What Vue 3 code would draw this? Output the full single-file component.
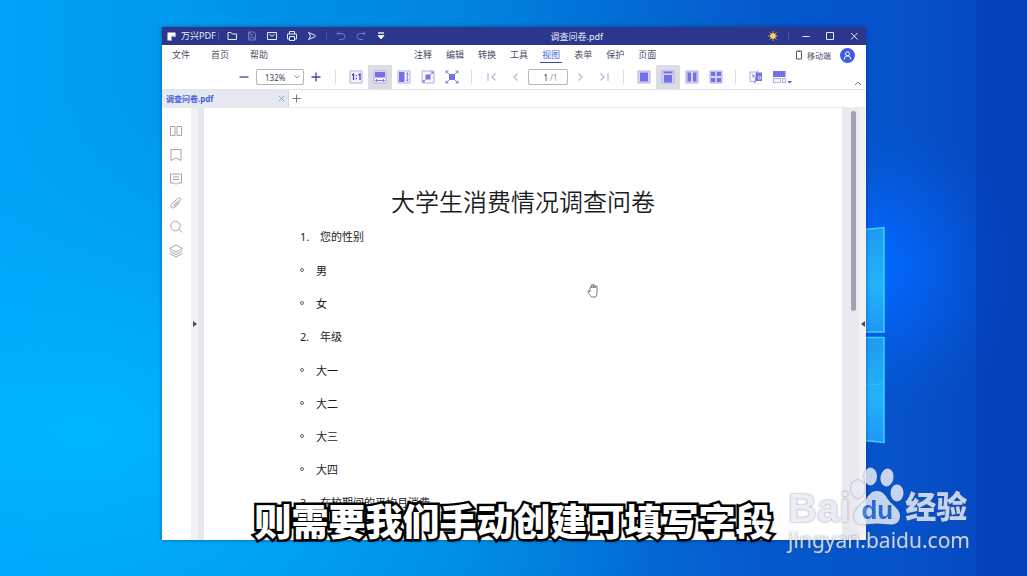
<script setup>
import { ref } from 'vue';

const leftMenus = ['文件', '首页', '帮助'];
const tabs = ['注释', '编辑', '转换', '工具', '视图', '表单', '保护', '页面'];
const activeTab = ref('视图');

const zoom = ref('132%');
const page = ref('1');
const fitMode = ref('width');
const layoutMode = ref('scroll');

const lines = [
  { num: '1.', text: '您的性别' },
  { text: '男' },
  { text: '女' },
  { num: '2.', text: '年级' },
  { text: '大一' },
  { text: '大二' },
  { text: '大三' },
  { text: '大四' },
  { num: '3.', text: '在校期间的平均月消费' },
];
</script>

<template>
  <div class="desktop">
    <!-- wallpaper -->
    <svg class="wallpaper" viewBox="0 0 1027 576" preserveAspectRatio="none" aria-hidden="true">
      <defs>
        <linearGradient id="sky" x1="0" y1="0" x2="1" y2="0">
          <stop offset="0" stop-color="#00a3f8" />
          <stop offset="0.16" stop-color="#0099ee" />
          <stop offset="0.45" stop-color="#0084e0" />
          <stop offset="0.75" stop-color="#0558cc" />
          <stop offset="0.88" stop-color="#0652ca" />
          <stop offset="1" stop-color="#0644be" />
        </linearGradient>
        <radialGradient id="cyan" cx="0.08" cy="0.75" r="0.6">
          <stop offset="0" stop-color="#00b6ff" />
          <stop offset="0.35" stop-color="#00b0ff" stop-opacity="0.7" />
          <stop offset="1" stop-color="#00a0f0" stop-opacity="0" />
        </radialGradient>
        <radialGradient id="glow" gradientUnits="userSpaceOnUse" cx="870" cy="268" r="150">
          <stop offset="0" stop-color="#006cff" />
          <stop offset="0.3" stop-color="#0266fa" stop-opacity="0.8" />
          <stop offset="1" stop-color="#0558d8" stop-opacity="0" />
        </radialGradient>
        <linearGradient id="pane" x1="0" y1="0" x2="0" y2="1">
          <stop offset="0" stop-color="#219af0" />
          <stop offset="0.55" stop-color="#22b4ff" />
          <stop offset="1" stop-color="#2196f6" />
        </linearGradient>
      </defs>
      <rect width="1027" height="576" fill="url(#sky)" />
      <rect width="1027" height="576" fill="url(#cyan)" />
      <rect width="1027" height="576" fill="url(#glow)" />
      <path d="M976 0H1027V576H976Z" fill="#0436b0" fill-opacity="0.35" />
      <path d="M190 0L262 27H162L130 0Z" fill="#00a8f8" fill-opacity="0.15" />
      <path d="M860 230L884 227.500V332H860Z" fill="url(#pane)" stroke="#35d4ff" stroke-width="1.500" />
      <path d="M860 337.500H884V442.500L860 440Z" fill="url(#pane)" stroke="#35d4ff" stroke-width="1.500" />
      <path d="M860 386L884 383.500" stroke="#45c8ff" stroke-width="0.500" />
    </svg>

    <main class="window">
      <header class="titlebar">
        <div class="titleGroup">
          <svg class="logo" viewBox="0 0 9 9"><path d="M0.500 0.500H8.500V5H4.500V8.500H0.500Z" fill="#fff" /><path d="M4 3.500H8.500V5H4.500V8.500H4Z" fill="#aab2ee" /></svg>
          <span class="appName">万兴PDF</span>
          <i class="titleSep brandSep"></i>
          <button class="titleBtn" aria-label="打开"><svg viewBox="0 0 12 12"><path d="M2 2.500H5L6.200 4H10.500V9.500H2Z" /></svg></button>
          <button class="titleBtn dim" aria-label="保存"><svg viewBox="0 0 12 12"><path d="M2.500 2H8L9.500 3.500V10H2.500ZM4 10V7H8V10M4 2V4.500H7" /></svg></button>
          <button class="titleBtn" aria-label="邮件"><svg viewBox="0 0 12 12"><path d="M1.500 2.500H10.500V9.500H1.500ZM3.500 4.500L6 6.200L8.500 4.500" /></svg></button>
          <button class="titleBtn" aria-label="打印"><svg viewBox="0 0 12 12"><path d="M3.500 4V1.500H8.500V4M3.500 9H1.500V4H10.500V9H8.500M3.500 6.500H8.500V10.500H3.500Z" /></svg></button>
          <button class="titleBtn" aria-label="分享"><svg viewBox="0 0 12 12"><path d="M2.500 2.500L9.500 5.500M9.500 6.500L2.500 9.500M2.500 2.500L4.500 6L2.500 9.500" /></svg></button>
          <i class="titleSep"></i>
          <button class="titleBtn dim" aria-label="撤销"><svg viewBox="0 0 12 12"><path d="M4 1.500L2 3.500L4 5.500M2 3.500H7A3 3 0 0 1 7 9.500H4" /></svg></button>
          <button class="titleBtn dim" aria-label="重做"><svg viewBox="0 0 12 12"><path d="M8 1.500L10 3.500L8 5.500M10 3.500H5A3 3 0 0 0 5 9.500H8" /></svg></button>
          <button class="titleBtn" aria-label="更多"><svg viewBox="0 0 12 12"><path d="M3 3H9" stroke-width="1.500" /><path d="M3 5.500H9L6 9Z" fill="#fff" /></svg></button>
        </div>
        <span class="fileTitle">调查问卷.pdf</span>
        <div class="titleGroup">
          <button class="titleBtn" aria-label="主题">
            <svg viewBox="0 0 12 12"><path d="M6 1V11M1 6H11M2.500 2.500L9.500 9.500M9.500 2.500L2.500 9.500" stroke="#c99a58" /><circle cx="6" cy="6" r="2.800" fill="#ffd257" stroke="none" /></svg>
          </button>
          <i class="titleSep themeSep"></i>
          <button class="winBtn" aria-label="最小化"><svg viewBox="0 0 12 12"><path d="M2.500 6.500H9.500" /></svg></button>
          <button class="winBtn" aria-label="最大化"><svg viewBox="0 0 12 12"><path d="M2.500 2.500H9.500V9.500H2.500Z" /></svg></button>
          <button class="winBtn" aria-label="关闭"><svg viewBox="0 0 12 12"><path d="M3 3L9.500 9.500M9.500 3L3 9.500" /></svg></button>
        </div>
      </header>

      <nav class="menuRow">
        <div class="leftMenus">
          <button v-for="m in leftMenus" :key="m" class="menuBtn">{{ m }}</button>
        </div>
        <div class="tabMenus">
          <button
            v-for="t in tabs"
            :key="t"
            class="menuBtn"
            :class="{ active: activeTab === t }"
            @click="activeTab = t"
          >{{ t }}</button>
        </div>
        <button class="mobileBtn">
          <svg viewBox="0 0 8 10"><path d="M1.500 1H6.500V9H1.500ZM3 1.500H5" /></svg>
          移动端
        </button>
        <button class="avatar" aria-label="账户">
          <svg viewBox="0 0 15 15"><circle cx="7.500" cy="5.800" r="2" /><path d="M4.300 11.500C4.300 9 5.500 8 7.500 8S10.700 9 10.700 11.500" /></svg>
        </button>
      </nav>

      <div class="toolbar">
        <button class="tool" aria-label="缩小"><svg viewBox="0 0 14 14"><path d="M2.500 7H11.500" class="strong" /></svg></button>
        <div class="selectWrap">
          <select v-model="zoom" class="zoomSelect" aria-label="缩放比例">
            <option>100%</option>
            <option>132%</option>
            <option>150%</option>
          </select>
          <svg class="caret" viewBox="0 0 6 4"><path d="M0.500 0.500L3 3L5.500 0.500" /></svg>
        </div>
        <button class="tool" aria-label="放大"><svg viewBox="0 0 14 14"><path d="M2.500 7H11.500M7 2.500V11.500" class="strong" /></svg></button>
        <i class="sep"></i>
        <button class="tool" :class="{ on: fitMode === 'actual' }" aria-label="实际大小" @click="fitMode = 'actual'">
          <svg viewBox="0 0 14 14"><path d="M1 1H13V13H1Z" class="frame" /><path d="M3 5L4.500 4V10M9.500 5L11 4V10M7.300 5V6.300M7.300 8V9.300" class="strong" /></svg>
        </button>
        <button class="tool" :class="{ on: fitMode === 'width' }" aria-label="适合宽度" @click="fitMode = 'width'">
          <svg viewBox="0 0 14 14"><path d="M1 1H13V13H1Z" class="frame" /><path d="M2 2H12V7.500H2Z" class="fill" /><path d="M2.500 10.500H11.500M4 9L2.500 10.500L4 12M10 9L11.500 10.500L10 12" class="thin" /></svg>
        </button>
        <button class="tool" :class="{ on: fitMode === 'height' }" aria-label="适合高度" @click="fitMode = 'height'">
          <svg viewBox="0 0 14 14"><path d="M1 1H13V13H1Z" class="frame" /><path d="M2 2H7.500V12H2Z" class="fill" /><path d="M10.300 3V11M9 4.200L10.300 3L11.600 4.200M9 9.800L10.300 11L11.600 9.800" class="thin" /></svg>
        </button>
        <button class="tool" :class="{ on: fitMode === 'page' }" aria-label="适合页面" @click="fitMode = 'page'">
          <svg viewBox="0 0 14 14"><path d="M1 1H13V13H1Z" class="frame" /><path d="M4.500 4.500H9.500V9.500H4.500Z" class="fill" /><path d="M9.500 4.500L12 2M10 2H12V4M4.500 9.500L2 12M2 10V12H4" class="thin" /></svg>
        </button>
        <button class="tool" :class="{ on: fitMode === 'visible' }" aria-label="适合可见" @click="fitMode = 'visible'">
          <svg viewBox="0 0 14 14"><path d="M4 4H10V10H4Z" class="fill" /><path d="M1 3.500V1H3.500M1 1L4 4M10.500 1H13V3.500M13 1L10 4M1 10.500V13H3.500M1 13L4 10M10.500 13H13V10.500M13 13L10 10" class="thin" /></svg>
        </button>
        <i class="sep"></i>
        <button class="tool" aria-label="首页"><svg viewBox="0 0 14 14"><path d="M3 3V11M10.500 3.500L7 7L10.500 10.500" class="nav" /></svg></button>
        <button class="tool" aria-label="上一页"><svg viewBox="0 0 14 14"><path d="M8.500 3.500L5 7L8.500 10.500" class="nav" /></svg></button>
        <label class="pageBox">
          <input v-model="page" class="pageInput" aria-label="页码">
          <span class="pageTotal">/1</span>
        </label>
        <button class="tool" aria-label="下一页"><svg viewBox="0 0 14 14"><path d="M5.500 3.500L9 7L5.500 10.500" class="nav" /></svg></button>
        <button class="tool" aria-label="末页"><svg viewBox="0 0 14 14"><path d="M11 3V11M3.500 3.500L7 7L3.500 10.500" class="nav" /></svg></button>
        <i class="sep"></i>
        <button class="tool" :class="{ on: layoutMode === 'single' }" aria-label="单页" @click="layoutMode = 'single'">
          <svg viewBox="0 0 14 14"><path d="M1 1H13V13H1Z" class="frame tint" /><path d="M3 2.500H11V11.500H3Z" class="fill" /></svg>
        </button>
        <button class="tool" :class="{ on: layoutMode === 'scroll' }" aria-label="滚动" @click="layoutMode = 'scroll'">
          <svg viewBox="0 0 14 14"><path d="M1 1H13V13H1Z" class="frame tint" /><path d="M2.500 1.500H11.500V3.500H2.500ZM3 5H11V12.500H3Z" class="fill" /></svg>
        </button>
        <button class="tool" :class="{ on: layoutMode === 'double' }" aria-label="双页" @click="layoutMode = 'double'">
          <svg viewBox="0 0 14 14"><path d="M1 1H13V13H1Z" class="frame tint" /><path d="M2.500 2.500H6V11.500H2.500ZM8 2.500H11.500V11.500H8Z" class="fill" /></svg>
        </button>
        <button class="tool" :class="{ on: layoutMode === 'doubleScroll' }" aria-label="双页滚动" @click="layoutMode = 'doubleScroll'">
          <svg viewBox="0 0 14 14"><path d="M1 1H13V13H1Z" class="frame tint" /><path d="M2 2H6.200V6H2ZM7.800 2H12V6H7.800ZM2 8H6.200V12H2ZM7.800 8H12V12H7.800Z" class="fill" /></svg>
        </button>
        <i class="sep"></i>
        <button class="tool" aria-label="对比">
          <svg viewBox="0 0 14 14"><path d="M1 2H7V11.500H1Z" class="frame" /><path d="M7 2.500H13V11H7Z" class="fill" /><path d="M8.500 0.500L5.500 13.500M3 5H5V7H3.500" class="thin" /><path d="M9.500 6.500H11.500V9H9.500Z" fill="none" stroke="#e4e4ff" stroke-width="0.800" /></svg>
        </button>
        <button class="tool wide" aria-label="背景">
          <svg viewBox="0 0 20 14"><path d="M1 1H13.500V7H1Z" class="fill" /><path d="M1.500 8.500H8.500V12.500H1.500ZM10.500 8.500H13.500V12.500H10.500Z" class="frame" /><path d="M15.500 11H20L17.700 13.500Z" fill="#5a55b8" /></svg>
        </button>
        <button class="collapse" aria-label="收起"><svg viewBox="0 0 8 5"><path d="M1 4L4 1L7 4" /></svg></button>
      </div>

      <div class="docTabs">
        <div class="docTab">
          <span>调查问卷.pdf</span>
          <button class="tabClose" aria-label="关闭标签"><svg viewBox="0 0 8 8"><path d="M1 1L7 7M7 1L1 7" /></svg></button>
        </div>
        <button class="addTab" aria-label="新建标签"><svg viewBox="0 0 9 9"><path d="M4.500 0.500V8.500M0.500 4.500H8.500" /></svg></button>
      </div>

      <section class="workArea">
        <aside class="rail">
          <button aria-label="缩略图"><svg viewBox="0 0 14 14"><path d="M1.500 2.500H6V11.500H1.500ZM8 2.500H12.500V11.500H8Z" /></svg></button>
          <button aria-label="书签"><svg viewBox="0 0 14 14"><path d="M2 1.500H12V12.500L7 10L2 12.500Z" /></svg></button>
          <button aria-label="注释"><svg viewBox="0 0 14 14"><path d="M1.500 2H12.500V11H8.500L7 12.500L5.500 11H1.500ZM4 5H10M4 7.500H10" /></svg></button>
          <button aria-label="附件"><svg viewBox="0 0 14 14"><path d="M9.500 4.500L5.200 8.800C4.500 9.500 5.300 10.300 6 9.600L11 4.800C13 2.800 10.800 0.800 8.800 2.500L3 8C0.500 10.500 3.500 13.500 6 11L10.500 6.800" /></svg></button>
          <button aria-label="搜索"><svg viewBox="0 0 14 14"><circle cx="6.500" cy="6" r="4.700" /><path d="M10 9.500L13 12.500" /></svg></button>
          <button aria-label="图层"><svg viewBox="0 0 14 14"><path d="M7 1L13.500 4.500L7 8L0.500 4.500ZM0.500 7L7 10.500L13.500 7M0.500 9.500L7 13L13.500 9.500" /></svg></button>
        </aside>
        <button class="gutter" aria-label="展开左栏"><svg viewBox="0 0 4 6"><path d="M0 0V6L4 3Z" /></svg></button>
        <div class="margin"></div>
        <article class="paper">
          <h1>大学生消费情况调查问卷</h1>
          <div
            v-for="line in lines"
            :key="line.text"
            class="line"
            :class="{ question: line.num }"
          >
            <span v-if="line.num" class="num">{{ line.num }}</span>
            <span v-else class="bullet"></span>
            <span>{{ line.text }}</span>
          </div>
        </article>
        <div class="scrollTrack"><div class="thumb"></div></div>
        <button class="gutter right" aria-label="展开右栏"><svg viewBox="0 0 4 6"><path d="M4 0V6L0 3Z" /></svg></button>
      </section>
    </main>

    <svg class="hand" viewBox="0 0 12 15" aria-hidden="true">
      <path d="M3 9V4.500C3 3.500 4.500 3.500 4.500 4.500V2.200C4.500 1.200 6.200 1.200 6.200 2.200V5V2.500C6.200 1.500 8 1.500 8 2.500V5V3.800C8 2.900 10 2.900 10 3.800V9.500C10 12 9 13.500 8.500 14H4.500C3.500 12.500 1.500 10.500 1 8.500C0.800 7.500 2 7.300 3 9Z" fill="#fff" stroke="#444" stroke-width="0.700" />
    </svg>

    <div class="watermark">
      <div class="brand">
        <span class="bai">Bai</span>
        <span class="paw">
          <svg viewBox="0 0 54 58" aria-hidden="true">
            <ellipse cx="8" cy="22" rx="7" ry="9" />
            <ellipse cx="20.500" cy="9.500" rx="6.500" ry="9" />
            <ellipse cx="37" cy="10.500" rx="6.500" ry="9" transform="rotate(10 37 10.500)" />
            <ellipse cx="47" cy="26" rx="6.500" ry="8.500" />
            <path d="M27 24C34 24 36 30 40 35C45 40 50 43 50 49C50 55 46 57.500 41 57.500C36 57.500 32 56.500 27 56.500S18 57.500 13 57.500C8 57.500 4 55 4 49C4 43 9 40 14 35C18 30 20 24 27 24Z" />
          </svg>
          <span class="du">du</span>
        </span>
        <span class="jingyan">经验</span>
      </div>
      <div class="site">jingyan.baidu.com</div>
    </div>

    <p class="subtitle">则需要我们手动创建可填写字段</p>
  </div>
</template>

<style>
body {
  margin: 0;
  overflow: hidden;
}
</style>

<style scoped>
.desktop {
  position: relative;
  box-sizing: border-box;
  height: 100vh;
  display: flex;
  padding: 27px 161px 36px 162px;
  background: #0084e0;
  font-family: "Noto Sans", "Noto Sans CJK SC", sans-serif;
  font-size: 9px;
  color: #4a4d5e;
}

.wallpaper {
  position: absolute;
  inset: 0;
  width: 100%;
  height: 100%;
}

button {
  padding: 0;
  border: 0;
  background: none;
  font: inherit;
  color: inherit;
  display: flex;
  align-items: center;
  justify-content: center;
}

svg {
  display: block;
  fill: none;
}

.window {
  position: relative;
  flex: 1;
  min-width: 0;
  display: flex;
  flex-direction: column;
  background: #fff;
  box-shadow: 0 0 4px rgba(0, 30, 90, 0.5);
}

/* title bar */
.titlebar {
  display: flex;
  justify-content: space-between;
  align-items: center;
  height: 18px;
  padding-left: 5px;
  background: #2b368c;
  color: #eceefa;
}

.titleGroup {
  display: flex;
  align-items: center;
}

.logo {
  width: 9px;
  height: 9px;
}

.appName {
  margin-left: 5px;
  line-height: 18px;
}

.titleSep {
  width: 1px;
  height: 8px;
  margin: 0 4px;
  background: #4a54a4;
}

.brandSep {
  margin: 0 3px 0 2px;
}

.themeSep {
  margin: 0 5px;
}

.titleBtn {
  width: 20px;
  height: 18px;
}

.winBtn {
  width: 24px;
  height: 18px;
}

.titleBtn svg,
.winBtn svg {
  width: 12px;
  height: 12px;
  stroke: #e6e8fa;
}

.titleBtn.dim svg {
  stroke: #7079bc;
}

/* menu row */
.menuRow {
  display: flex;
  align-items: center;
  height: 20px;
  padding: 0 11px 0 10px;
}

.leftMenus {
  display: flex;
  gap: 21px;
}

.tabMenus {
  display: flex;
  gap: 14px;
  margin: 0 auto 0 146px;
}

.menuBtn {
  position: relative;
  height: 20px;
  line-height: 20px;
  white-space: nowrap;
}

.menuBtn.active {
  color: #4863dc;
}

.menuBtn.active::after {
  content: "";
  position: absolute;
  left: -2px;
  right: -2px;
  bottom: 2px;
  height: 1px;
  background: #2c4ac8;
}

.mobileBtn {
  gap: 4px;
  font-size: 8px;
  margin-right: 9px;
}

.mobileBtn svg {
  width: 8px;
  height: 10px;
  stroke: #555868;
}

.avatar {
  width: 15px;
  height: 15px;
  border-radius: 50%;
  background: #3e5ce4;
}

.avatar svg {
  width: 15px;
  height: 15px;
  stroke: #fff;
}

/* toolbar */
.toolbar {
  position: relative;
  display: flex;
  justify-content: center;
  height: 24px;
  border-bottom: 1px solid #e3e4e8;
}

.tool {
  width: 24px;
  height: 24px;
}

.tool.wide {
  width: 28px;
}

.tool.on {
  background: #dadce6;
}

.tool svg {
  width: 14px;
  height: 14px;
}

.tool.wide svg {
  width: 20px;
}

.strong {
  stroke: #4b3fa8;
  stroke-width: 1.3;
}

.frame {
  stroke: #b3aedf;
  fill: #f4f3ff;
}

.frame.tint {
  fill: #d9d6f8;
}

.fill {
  fill: #7470e6;
}

.thin {
  stroke: #7a72c8;
  stroke-width: 0.9;
}

.nav {
  stroke: #b4b0da;
  stroke-width: 1.1;
}

.sep {
  width: 1px;
  height: 14px;
  margin: 5px 8px 0 7px;
  background: #dcdde4;
}

.selectWrap {
  position: relative;
  display: flex;
  align-items: center;
}

.zoomSelect {
  box-sizing: border-box;
  width: 48px;
  height: 16px;
  padding: 0 0 0 8px;
  appearance: none;
  border: 1px solid #b4b5bd;
  border-radius: 2px;
  background: #fff;
  font: inherit;
  font-size: 8px;
  color: #444654;
}

.caret {
  position: absolute;
  right: 4px;
  width: 6px;
  height: 4px;
  stroke: #888a98;
}

.pageBox {
  box-sizing: border-box;
  width: 40px;
  height: 16px;
  margin-top: 4px;
  display: flex;
  align-items: center;
  border: 1px solid #b4b5bd;
  border-radius: 2px;
}

.pageInput {
  width: 19px;
  height: 12px;
  padding: 0;
  border: 0;
  outline: 0;
  background: none;
  text-align: right;
  font: inherit;
  font-size: 8px;
  color: #333;
}

.pageTotal {
  margin-left: 2px;
  font-size: 8px;
  color: #9a9ba6;
}

.collapse {
  position: absolute;
  right: 4px;
  bottom: 3px;
}

.collapse svg {
  width: 8px;
  height: 5px;
  stroke: #777988;
}

/* document tabs */
.docTabs {
  box-sizing: border-box;
  display: flex;
  height: 18px;
  border-bottom: 1px solid #ececf0;
}

.docTab {
  box-sizing: border-box;
  display: flex;
  align-items: center;
  justify-content: space-between;
  width: 127px;
  padding: 0 3px 0 4px;
  border-right: 1px solid #d4d6de;
  background: #e6e8ef;
  font-size: 8px;
  font-weight: 700;
  color: #4560de;
}

.tabClose svg {
  width: 7px;
  height: 7px;
  stroke: #7f92e4;
}

.addTab {
  width: 15px;
}

.addTab svg {
  width: 9px;
  height: 9px;
  stroke: #777988;
}

/* work area */
.workArea {
  flex: 1;
  min-height: 0;
  display: flex;
}

.rail {
  box-sizing: border-box;
  display: flex;
  flex-direction: column;
  width: 29px;
  padding: 11px 1px 0 0;
}

.rail button {
  height: 24px;
}

.rail svg {
  width: 14px;
  height: 14px;
  stroke: #9a9ba4;
  stroke-width: 0.9;
}

.gutter {
  width: 7px;
  background: #f2f2f4;
}

.gutter svg {
  width: 4px;
  height: 6px;
  fill: #4a4a68;
}

.margin {
  width: 6px;
  background: #e7e8ed;
}

.paper {
  flex: 1;
  min-width: 0;
  overflow: hidden;
  color: #1c1c1c;
}

.paper h1 {
  margin: 77px 0 1px;
  text-align: center;
  font-size: 24px;
  line-height: 33px;
  font-weight: 350;
}

.line {
  display: flex;
  align-items: center;
  height: 33px;
  padding-left: 96px;
  font-size: 11px;
}

.line.question {
  height: 34px;
}

.num {
  width: 20px;
}

.bullet {
  box-sizing: border-box;
  width: 4px;
  height: 4px;
  margin-right: 12px;
  border: 1px solid #666;
  border-radius: 50%;
}

.scrollTrack {
  display: flex;
  justify-content: flex-end;
  width: 17px;
  padding: 3px 0;
  background: #e9eaef;
  box-sizing: border-box;
}

.thumb {
  width: 5px;
  height: 47%;
  margin-right: 3px;
  border-radius: 3px;
  background: #a0a2b4;
}

/* hand pointer over the page */
.hand {
  position: absolute;
  left: 587px;
  top: 283px;
  width: 12px;
  height: 15px;
}

/* watermark */
.watermark {
  position: absolute;
  right: 57px;
  bottom: 24px;
  display: flex;
  flex-direction: column;
  color: #e6ebf6;
  opacity: 0.85;
  filter: drop-shadow(0 0 1px rgba(80, 80, 90, 0.7));
}

.brand {
  display: flex;
  align-items: flex-end;
  height: 61px;
}

.bai {
  font-family: "Liberation Sans", sans-serif;
  font-size: 40px;
  font-weight: 700;
  line-height: 40px;
}

.paw {
  position: relative;
  width: 54px;
  padding-bottom: 3px;
}

.paw svg {
  width: 54px;
  height: 58px;
  fill: #e6ebf6;
}

.du {
  position: absolute;
  left: 0;
  right: 0;
  bottom: 4px;
  text-align: center;
  font-family: "Liberation Sans", sans-serif;
  font-size: 26px;
  font-weight: 700;
  line-height: 28px;
  color: #2f6fce;
}

.jingyan {
  margin-left: 1px;
  padding-bottom: 6px;
  font-size: 31px;
  font-weight: 900;
  line-height: 32px;
}

.site {
  font-family: "Noto Sans", sans-serif;
  font-size: 21px;
  line-height: 24px;
}

/* video subtitle */
.subtitle {
  position: absolute;
  left: 0;
  right: 0;
  bottom: 34px;
  margin: 0;
  text-align: center;
  font-family: "Noto Sans CJK SC", sans-serif;
  font-size: 37px;
  line-height: 44px;
  font-weight: 900;
  color: #fff;
  -webkit-text-stroke: 5px #000;
  paint-order: stroke fill;
  text-shadow: 2px 2px 2px rgba(0, 0, 0, 0.6);
}
</style>
